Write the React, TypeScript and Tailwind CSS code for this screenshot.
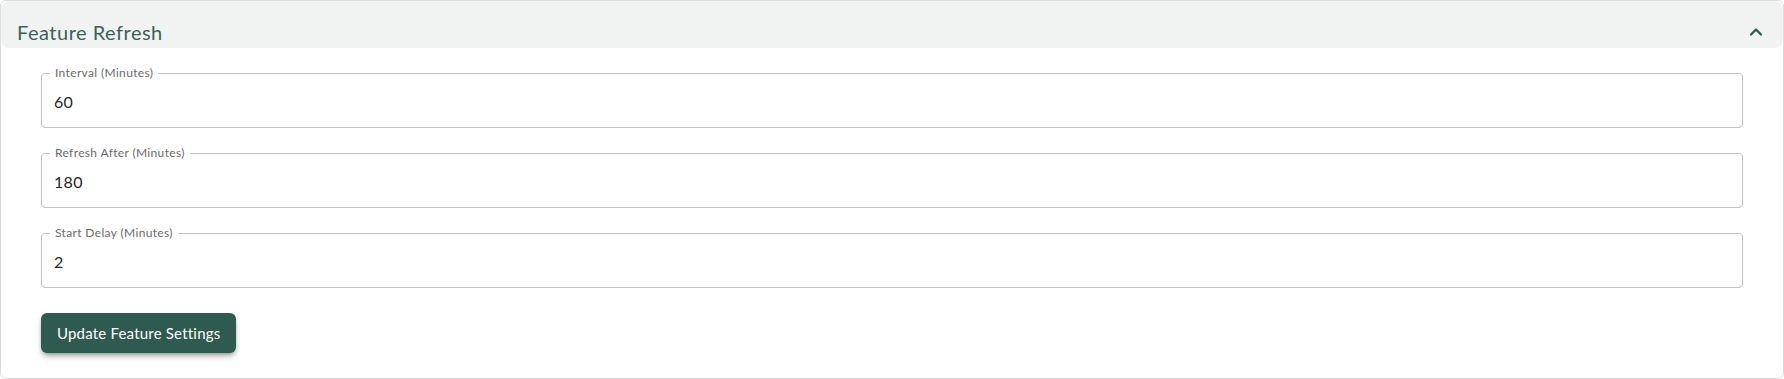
import { ChevronUp } from "lucide-react";

const fields = [
    { label: "Interval (Minutes)", value: "60" },
    { label: "Refresh After (Minutes)", value: "180" },
    { label: "Start Delay (Minutes)", value: "2" },
];

function Field({ label, value }: { label: string; value: string }) {
    return (
        <div className="relative h-[55px] border border-[#c4c4c4] rounded-[4px] flex items-center px-[12px] pt-[3px]">
            <span className="absolute left-[8px] -top-[9px] px-[5px] bg-white text-[12px] leading-[16px] tracking-[0.35px] text-[#6b6b6b]">{label}</span>
            <input
                defaultValue={value}
                className="w-full bg-transparent outline-none text-[16px] tracking-[0.3px] text-[#262626]"
            />
        </div>
    );
}

function App() {
    return (
        <div className="bg-white font-['Lato','Open_Sans',sans-serif]">
            <div className="h-[379px] border border-[#dcdcdc] rounded-md flex flex-col">
                <div className="h-[47px] bg-[#f1f3f2] rounded-lg flex items-center justify-between pl-[16px] pr-[17px] pt-[15px]">
                    <h2 className="text-[20px] text-[#3a6359] leading-none tracking-[0.5px]">Feature Refresh</h2>
                    <ChevronUp size={20} strokeWidth={2.75} className="text-[#2e5a4f]" />
                </div>

                <div className="flex flex-col gap-[25px] px-[40px] pt-[25px]">
                    {fields.map((f) => (
                        <Field key={f.label} label={f.label} value={f.value} />
                    ))}
                </div>

                <div className="px-[40px] pt-[25px]">
                    <button className="h-[40px] px-[16px] rounded-[6px] bg-[#2e5a4f] text-white text-[15px] tracking-[0.2px] shadow-md shadow-black/30 cursor-pointer hover:bg-[#264b41]">
                        Update Feature Settings
                    </button>
                </div>
            </div>
        </div>
    );
}

export default App;
